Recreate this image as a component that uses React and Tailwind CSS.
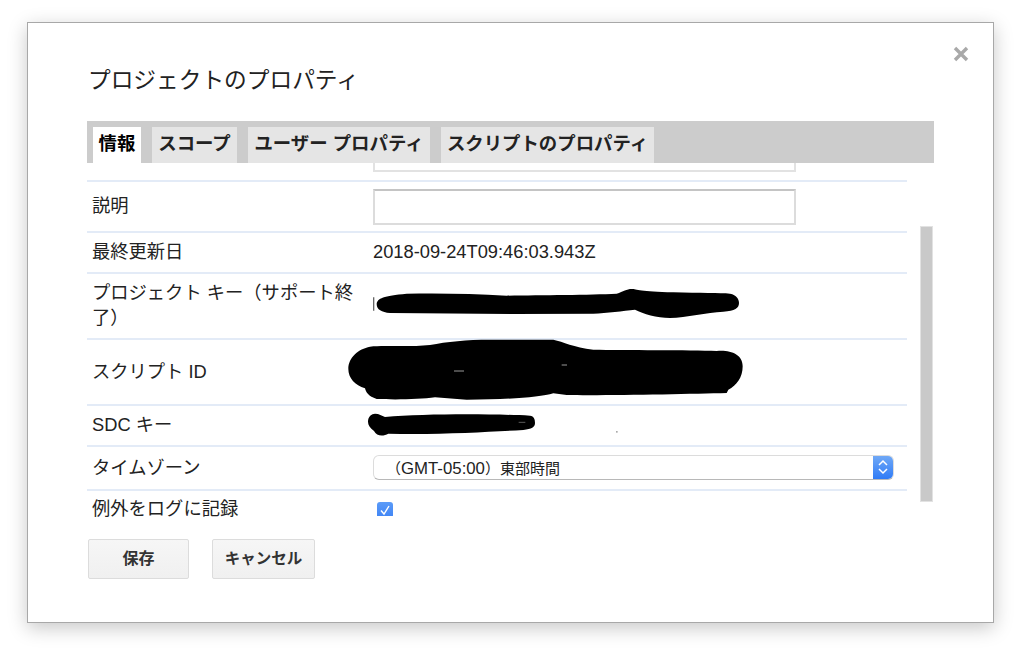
const font = { fontFamily: '"Liberation Sans", "Noto Sans CJK JP", sans-serif' };

const tabs = [
  { label: '情報', width: 'w-[48px]', active: true },
  { label: 'スコープ', width: 'w-[85px]' },
  { label: 'ユーザー プロパティ', width: 'w-[182px]' },
  { label: 'スクリプトのプロパティ', width: 'w-[213px]' },
];

// Row with a label on the left and any value on the right
const Row = ({ label, height, children }) => (
  <div className={`flex items-center border-b-2 border-[#e3ebf7] ${height}`}>
    <div className="mb-[2px] w-[286px] shrink-0 pl-[5px] pr-[10px] text-[18.3px] leading-[25px] text-[#222]">
      {label}
    </div>
    {children}
  </div>
);

// Marker scribbles over the hidden keys
const Scribbles = () => (
  <svg
    className="absolute left-[253px] top-[116px]"
    width="420"
    height="170"
    viewBox="0 0 1260 510"
  >
    <path d="M101 55v40" stroke="#666" strokeWidth="4" fill="none" />
    <path
      d="M110 75C112 58 130 50 200 44C300 42 400 44 500 50C600 48 750 48 830 44C850 38 860 30 875 30C890 30 900 38 1000 40C1080 42 1140 42 1170 44C1190 48 1197 60 1197 72C1197 88 1185 95 1150 98C1100 100 1040 116 990 117C950 116 910 105 885 92C850 96 800 102 760 104L520 105L150 102C125 100 110 92 110 75Z"
      fill="#000"
    />
    <path
      d="M25 270C25 235 55 210 90 203C130 198 200 205 270 198C320 188 380 182 450 182L640 182C670 188 700 205 760 212C850 214 1050 212 1130 216C1170 212 1208 225 1208 262C1208 295 1190 320 1165 332L1160 342C1050 345 800 350 680 348L640 343C600 355 500 362 380 362L285 355C240 362 150 362 110 360C85 352 78 340 75 328C45 318 25 298 25 270Z"
      fill="#000"
    />
    <path d="M342 276h30M665 258h16" stroke="#999" strokeWidth="3" fill="none" />
    <path
      d="M84 428C84 412 95 404 105 404C118 404 125 410 135 414C250 404 450 404 570 410C582 412 585 420 585 432C585 445 575 450 550 453C450 458 300 468 145 464C130 472 110 472 102 456C90 446 84 438 84 428Z"
      fill="#000"
    />
    <path d="M536 430h20" stroke="#888" strokeWidth="2" fill="none" />
    <rect x="828" y="456" width="5" height="5" fill="#aaa" />
  </svg>
);

const App = () => {
  return (
    <div className="h-[653px] w-[1024px] overflow-hidden bg-white pl-[27px] pt-[22px]" style={font}>
      <div className="relative h-[601px] w-[967px] border border-[#a8a8a8] bg-white pl-[59px] pt-[41px] shadow-[0_5px_18px_rgba(0,0,0,0.22)]">
        {/* Close */}
        <svg className="absolute right-[24px] top-[23px]" width="16" height="16" viewBox="0 0 16 16">
          <path d="M2 2L14 14M14 2L2 14" stroke="#a9a9a9" strokeWidth="3.4" fill="none" />
        </svg>

        <h2 className="pl-[1px] text-[22.7px] font-normal leading-[32px] text-[#222]">
          プロジェクトのプロパティ
        </h2>

        {/* Tabs */}
        <div className="mt-[25px] flex h-[42px] w-[847px] items-end gap-[11px] bg-[#cccccc] pl-[6px]">
          {tabs.map((tab) => (
            <div
              key={tab.label}
              className={`flex h-[36px] items-center justify-center whitespace-nowrap pb-[2px] text-[18.4px] font-bold text-[#222] ${tab.width} ${
                tab.active ? 'bg-white text-black' : 'bg-[#e5e5e5]'
              }`}
            >
              {tab.label}
            </div>
          ))}
        </div>

        {/* Body */}
        <div className="flex">
          <div className="relative h-[358px] w-[820px] overflow-hidden">
            <div className="flex h-[19px] items-end border-b-2 border-[#e3ebf7] pl-[286px]">
              <div className="mb-[8px] h-[9px] w-[423px] border-x-2 border-b-2 border-[#e2e2e2]" />
            </div>
            <Row label="説明" height="h-[51px]">
              <div className="h-[36px] w-[423px] border-2 border-[#dcdcdc] border-t-[#c4c4c4]" />
            </Row>
            <Row label="最終更新日" height="h-[41px]">
              <span className="mb-[1px] text-[18.3px] text-[#222]">2018-09-24T09:46:03.943Z</span>
            </Row>
            <Row label="プロジェクト キー（サポート終了）" height="h-[66px]" />
            <Row label="スクリプト ID" height="h-[66px]" />
            <Row label="SDC キー" height="h-[41px]" />
            <Row label="タイムゾーン" height="h-[44px]">
              <div className="mb-[2px] flex h-[25px] w-[521px] items-center overflow-hidden rounded-[6px] border border-[#dcdcdc] border-b-[#b8b8b8] bg-white">
                <span className="flex-1 translate-y-[2px] pl-[12px] text-[15px] text-[#222]">
                  （<span className="text-[16.8px]">GMT-05:00</span>）東部時間
                </span>
                <div className="flex h-full w-[20px] items-center justify-center bg-gradient-to-b from-[#6fa8f6] to-[#2f7bf6]">
                  <svg width="10" height="16" viewBox="0 0 10 16">
                    <path d="M1 6L5 2L9 6M1 10L5 14L9 10" stroke="#fff" strokeWidth="1.5" fill="none" />
                  </svg>
                </div>
              </div>
            </Row>
            <div className="flex h-[30px]">
              <div className="w-[290px] shrink-0 pl-[5px] pt-[9px] text-[18.3px] leading-[17px] text-[#222]">
                例外をログに記録
              </div>
              {/* the list is scrolled, so the checkbox is cut off at the bottom */}
              <div className="h-[25px] overflow-hidden pt-[11px]">
                <div className="flex h-[16px] w-[16px] items-center justify-center rounded-[3px] bg-gradient-to-b from-[#5b9bf8] to-[#3f84f5]">
                  <svg width="12" height="12" viewBox="0 0 12 12">
                    <path d="M2 6.5L5 10L10 2" stroke="#fff" strokeWidth="1.4" fill="none" />
                  </svg>
                </div>
              </div>
            </div>
            <Scribbles />
          </div>

          {/* Scroll thumb */}
          <div className="ml-[13px] mt-[63px] h-[276px] w-[13px] border border-[#e2e2e2] bg-[#c9c9c9]" />
        </div>

        {/* Actions */}
        <div className="ml-px mt-[18px] flex gap-[23px]">
          <button className="h-[40px] w-[101px] rounded-[2px] border border-[#dcdcdc] bg-gradient-to-b from-[#f6f6f6] to-[#f0f0f0] text-[16px] font-bold text-[#333]">
            保存
          </button>
          <button className="h-[40px] w-[103px] rounded-[2px] border border-[#dcdcdc] bg-gradient-to-b from-[#f6f6f6] to-[#f0f0f0] text-[15.5px] font-bold text-[#333]">
            キャンセル
          </button>
        </div>
      </div>
    </div>
  );
};

export default App;
